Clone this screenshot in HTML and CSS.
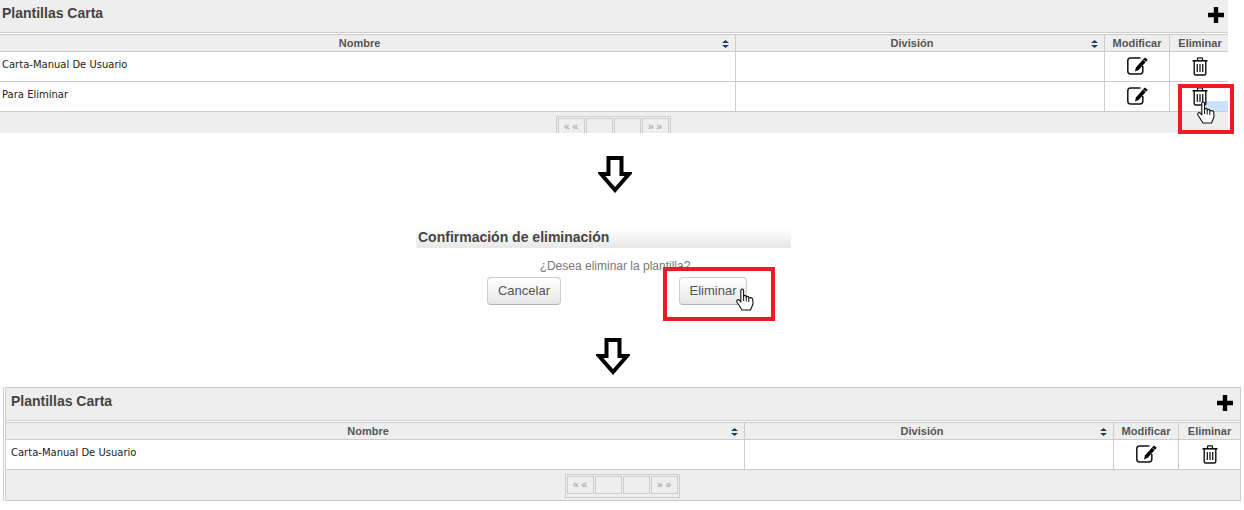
FILE: index.html
```html
<!DOCTYPE html>
<html lang="es">
<head>
    <meta charset="UTF-8">
    <meta name="viewport" content="width=device-width, initial-scale=1.0">
    <title>Plantillas Carta</title>
    <link rel="stylesheet" href="styles.css">
</head>
<body>
    <svg class="defs" width="0" height="0">
        <symbol id="plus" viewBox="0 0 16 16">
            <path d="M5.800 0h4.400v5.800H16v4.400h-5.800V16H5.800v-5.800H0V5.800h5.800z"/>
        </symbol>
        <symbol id="sort" viewBox="0 0 7 8">
            <path d="M3.500 0 7 3H0zM0 5h7L3.500 8z"/>
        </symbol>
        <symbol id="edit" viewBox="0 0 21 18">
            <path d="M13.500 1H3.500Q.8 1 .8 3.700V14.300Q.8 17 3.500 17H13Q15.800 17 15.800 14.300V9" fill="none" stroke="currentColor" stroke-width="1.500"/>
            <path d="M17.800 .6 20.800 2.800 11.800 12.800 8 14.500 8.900 10.500z"/>
            <path d="M16.400 3 19 5" fill="none" stroke="#fff" stroke-width=".7"/>
        </symbol>
        <symbol id="trash" viewBox="0 0 16 19">
            <path d="M5.500 3V1.500Q5.500 .8 6.200 .8H9.800Q10.500 .8 10.500 1.500V3" fill="none" stroke="currentColor" stroke-width="1.200"/>
            <path d="M.5 3.800H15.500" fill="none" stroke="currentColor" stroke-width="1.600"/>
            <path d="M2.200 4V16.500Q2.200 18 3.700 18H12.300Q13.800 18 13.800 16.500V4" fill="none" stroke="currentColor" stroke-width="1.400"/>
            <path d="M5.300 7V15M8 7V15M10.700 7V15" fill="none" stroke="#1c1c1c" stroke-width="1.300"/>
        </symbol>
        <symbol id="hand" viewBox="0 0 18 23">
            <path d="M4.800 2.500C4.800 .6 7.600 .6 7.600 2.500V8.500C7.600 7 10.200 7 10.200 8.500V9.500C10.200 8 12.800 8 12.800 9.500V10.500C12.800 9.200 16.500 9.200 16.800 11.500L17 16 14.500 22H6L.9 14C.2 12.200 2 11 3.300 12.200L4.800 14Z" fill="#fff" stroke="#111" stroke-width="1.100" stroke-linejoin="round"/>
            <path d="M7.600 8.500V13M10.200 9.500V13.500M12.800 10.500V14" fill="none" stroke="#111"/>
        </symbol>
        <symbol id="arrow" viewBox="0 0 34 37">
            <path d="M10.500 2H23.500V18H31L17 34 3 18H10.500Z" fill="#fff" stroke="#000" stroke-width="4"/>
        </symbol>
    </svg>

    <section class="panel panel-first">
        <div class="panel-title">
            <h2>Plantillas Carta</h2>
            <svg class="icon-plus"><use href="#plus"/></svg>
        </div>
        <div class="grid-head">
            <div class="col-head col-sort"><span>Nombre</span><svg class="icon-sort"><use href="#sort"/></svg></div>
            <div class="col-head col-sort"><span>División</span><svg class="icon-sort"><use href="#sort"/></svg></div>
            <div class="col-head">Modificar</div>
            <div class="col-head">Eliminar</div>
        </div>
        <div class="grid-row">
            <div class="cell cell-text">Carta-Manual De Usuario</div>
            <div class="cell"></div>
            <div class="cell cell-icon"><svg class="icon-edit"><use href="#edit"/></svg></div>
            <div class="cell cell-icon"><svg class="icon-trash"><use href="#trash"/></svg></div>
        </div>
        <div class="grid-row">
            <div class="cell cell-text">Para Eliminar</div>
            <div class="cell"></div>
            <div class="cell cell-icon"><svg class="icon-edit"><use href="#edit"/></svg></div>
            <div class="cell cell-icon cell-hover"><svg class="icon-trash"><use href="#trash"/></svg></div>
        </div>
        <div class="panel-foot">
            <div class="pager">
                <span class="pager-btn">«&nbsp;«</span>
                <span class="pager-btn"></span>
                <span class="pager-btn"></span>
                <span class="pager-btn">»&nbsp;»</span>
            </div>
        </div>
        <div class="mark mark-table"></div>
        <svg class="hand hand-table"><use href="#hand"/></svg>
    </section>

    <svg class="arrow arrow-first"><use href="#arrow"/></svg>

    <section class="dialog">
        <h3 class="dialog-title">Confirmación de eliminación</h3>
        <p class="dialog-text">¿Desea eliminar la plantilla?</p>
        <div class="dialog-actions">
            <button class="button button-cancel">Cancelar</button>
            <button class="button button-delete">Eliminar</button>
        </div>
        <div class="mark mark-dialog"></div>
        <svg class="hand hand-dialog"><use href="#hand"/></svg>
    </section>

    <svg class="arrow arrow-second"><use href="#arrow"/></svg>

    <div class="panel-frame">
        <section class="panel panel-last">
            <div class="panel-title">
                <h2>Plantillas Carta</h2>
                <svg class="icon-plus"><use href="#plus"/></svg>
            </div>
            <div class="grid-head">
                <div class="col-head col-sort"><span>Nombre</span><svg class="icon-sort"><use href="#sort"/></svg></div>
                <div class="col-head col-sort"><span>División</span><svg class="icon-sort"><use href="#sort"/></svg></div>
                <div class="col-head">Modificar</div>
                <div class="col-head">Eliminar</div>
            </div>
            <div class="grid-row">
                <div class="cell cell-text">Carta-Manual De Usuario</div>
                <div class="cell"></div>
                <div class="cell cell-icon"><svg class="icon-edit"><use href="#edit"/></svg></div>
                <div class="cell cell-icon"><svg class="icon-trash"><use href="#trash"/></svg></div>
            </div>
            <div class="panel-foot">
                <div class="pager">
                    <span class="pager-btn">«&nbsp;«</span>
                    <span class="pager-btn"></span>
                    <span class="pager-btn"></span>
                    <span class="pager-btn">»&nbsp;»</span>
                </div>
            </div>
        </section>
    </div>
</body>
</html>
```

FILE: styles.css
```css
body {
    margin: 0;
    height: 510px;
    overflow: hidden;
    background: #fff;
    font-family: "Liberation Sans", Arial, sans-serif;
}
.defs {
    display: block;
    height: 0;
}
svg {
    display: block;
}

/* tablas */
.panel {
    position: relative;
    box-sizing: border-box;
}
.panel-first {
    width: 1228px;
}
.panel-frame {
    width: 1238px;
    margin: 12px 0 0 3px;
    border-left: 1px solid #ccc;
    padding-left: 1px;
}
.panel-last {
    width: 1236px;
    border: 1px solid #ccc;
}
.panel-title {
    display: flex;
    justify-content: space-between;
    height: 32px;
    box-sizing: content-box;
    background: #eee;
    border-bottom: 1px solid #ccc;
    margin-bottom: 1px;
}
.panel-title h2 {
    margin: 0;
    padding: 5px 0 0 2px;
    font-size: 14px;
    line-height: 17px;
    color: #444;
}
.icon-plus {
    width: 16px;
    height: 16px;
    margin: 7px 4px 0 0;
}
.grid-head,
.grid-row {
    display: grid;
    grid-template-columns: 736px 369px 65px 58px;
    border-bottom: 1px solid #ccc;
}
.grid-head {
    height: 16px;
    background: #eee;
    border-top: 1px solid #ccc;
}
.grid-row {
    height: 29px;
    background: #fff;
}
.col-head {
    position: relative;
    border-right: 1px solid #ccc;
    font-size: 11px;
    font-weight: bold;
    line-height: 16px;
    color: #555;
    text-align: center;
}
.col-sort {
    padding-right: 14px;
}
.panel-first .col-sort {
    padding-right: 16px;
}
.col-head:last-child,
.cell:last-child {
    border-right: none;
}
.panel-first .col-head:last-child,
.panel-first .cell:last-child {
    padding-left: 2px;
}
.icon-sort {
    position: absolute;
    top: 5px;
    right: 6px;
    width: 7px;
    height: 8px;
    fill: #1b3f63;
}
.cell {
    border-right: 1px solid #ccc;
}
.cell-text {
    padding: 6px 0 0 2px;
    font-family: "DejaVu Sans", sans-serif;
    font-size: 10px;
    line-height: 13px;
    color: #222;
}
.cell-icon {
    display: flex;
    justify-content: center;
    padding-top: 5px;
    color: #111;
}
.cell-hover {
    background: linear-gradient(#c9e2fb, #c9e2fb) no-repeat right bottom / 22px 10px;
}
.icon-edit {
    width: 21px;
    height: 18px;
}
.icon-trash {
    width: 16px;
    height: 19px;
}
.panel-foot {
    height: 21px;
    overflow: hidden;
    background: #eee;
    display: flex;
    justify-content: center;
    padding-top: 4px;
    box-sizing: border-box;
}
.pager {
    display: flex;
    flex: none;
    height: 20px;
    gap: 1px;
    padding: 1px;
    border: 1px solid #ccc;
    margin-right: 2px;
}
.pager-btn {
    box-sizing: border-box;
    width: 27px;
    height: 18px;
    border: 1px solid #ccc;
    font-size: 10px;
    line-height: 16px;
    text-align: center;
    color: #999;
}
.panel-last .panel-title h2 {
    padding: 5px 0 0 5px;
}
.panel-last .grid-head,
.panel-last .grid-row {
    grid-template-columns: 739px 369px 65px 61px;
}
.panel-last .panel-foot {
    height: 30px;
}
.panel-last .cell-text {
    padding-left: 5px;
}
.panel-last .icon-plus {
    margin-right: 7px;
}

/* flechas */
.arrow {
    width: 34px;
    height: 37px;
}
.arrow-first {
    margin: 23px 0 0 598px;
}
.arrow-second {
    margin: 33px 0 0 596px;
}

/* dialogo */
.dialog {
    position: relative;
    width: 375px;
    margin: 35px 0 0 416px;
}
.dialog-title {
    margin: 0;
    height: 20px;
    padding-left: 2px;
    background: linear-gradient(#fff, #e8e8e8);
    font-size: 14px;
    line-height: 19px;
    color: #444;
}
.dialog-text {
    margin: 11px 0 0;
    padding-left: 23px;
    font-size: 12px;
    line-height: 14px;
    color: #777;
    text-align: center;
}
.dialog-actions {
    display: flex;
    gap: 118px;
    margin: 4px 0 0 71px;
}
.button {
    box-sizing: border-box;
    height: 28px;
    padding: 0 0 2px;
    border: 1px solid #ccc;
    border-bottom-color: #b3b3b3;
    border-radius: 4px;
    background: linear-gradient(#fff, #e6e6e6);
    font-family: "Liberation Sans", Arial, sans-serif;
    font-size: 13px;
    color: #555;
}
.button-cancel {
    width: 74px;
}
.button-delete {
    width: 68px;
}

/* marcas rojas y cursores */
.mark {
    position: absolute;
    box-sizing: border-box;
    border: 4px solid #ed1c24;
}
.mark-table {
    left: 1178px;
    top: 84px;
    width: 56px;
    height: 50px;
}
.mark-dialog {
    left: 247px;
    top: 39px;
    width: 112px;
    height: 54px;
}
.hand {
    position: absolute;
    width: 18px;
    height: 23px;
}
.hand-table {
    left: 1197px;
    top: 101px;
}
.hand-dialog {
    left: 320px;
    top: 60px;
}
```
